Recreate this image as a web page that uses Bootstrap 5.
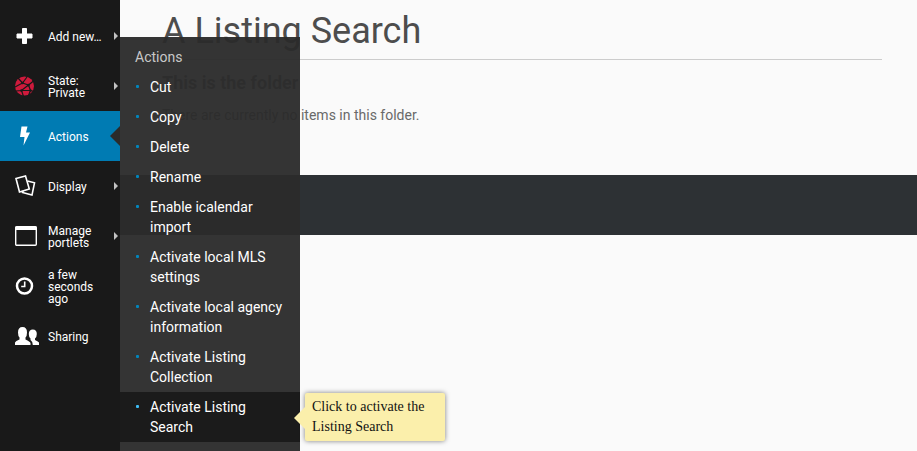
<!DOCTYPE html>
<html lang="en">
<head>
<meta charset="utf-8">
<title>A Listing Search</title>
<link href="https://cdn.jsdelivr.net/npm/bootstrap@5.3.0/dist/css/bootstrap.min.css" rel="stylesheet">
<style>
body{font-family:Roboto,sans-serif;background:#fafafa;color:#696969;height:451px;overflow:hidden}
.toolbar{width:120px;height:451px;background:#191919;padding-top:11px;z-index:5}
.tool{height:50px;padding-left:11px;color:#fff;text-decoration:none;font-size:12px;line-height:12px;position:relative;padding-top:2px}
.tool svg{width:28px;height:28px;flex:none;margin-right:9px;margin-top:-2px}
.tool.current{background:#007bb3}
.more::after{content:"";position:absolute;right:2px;top:21px;border:4px solid transparent;border-left-color:#c2c2c2;border-right:0}
.current::after{content:"";position:absolute;right:0;top:15px;border:10px solid transparent;border-right-color:#2b2b2b;border-left:0}
.submenu{position:absolute;left:120px;top:37px;width:180px;height:414px;background:rgba(43,43,43,.957);overflow:hidden;padding-top:10px;font-size:14px;line-height:20px;z-index:4}
.submenu h2{font-size:14px;line-height:20px;color:#c8c8c8;margin:0 0 5px 15px;font-weight:400}
.submenu a{display:block;color:#fff;text-decoration:none;padding:5px 10px 5px 30px;position:relative}
.submenu a::before{content:"";position:absolute;left:16px;top:13px;width:3px;height:3px;border-radius:1px;background:#0086bd}
.submenu a.chosen{background:#1b1b1b}
.submenu a.chosen::before{background:#3dbcf5}
.content-area{height:175px;padding:7px 35px 0 42px}
.content-area h1{font-size:36px;line-height:48px;font-weight:400;color:#4d4d4d;margin:0;border-bottom:1px solid #ccc;height:53px}
.content-area h3{font-size:18px;line-height:24px;font-weight:700;color:#696969;margin:11px 0 0}
.content-area p{font-size:14px;line-height:20px;margin:10px 0 0}
.footer-band{height:60px;background:#2d3134}
.hint{position:absolute;left:305px;top:393px;width:140px;height:48px;background:#fbefab;border-radius:2px;color:#111;font:14px/20px "Liberation Serif",serif;padding:4px 7px;box-shadow:0 0 5px rgba(0,0,0,.5);z-index:6}
.hint::before{content:"";position:absolute;left:-11px;top:14px;border:11px solid transparent;border-left:0;border-right-color:#fbefab}
</style>
<script src="https://cdn.jsdelivr.net/npm/bootstrap@5.3.0/dist/js/bootstrap.bundle.min.js"></script>
</head>
<body>
<div class="d-flex">
<nav class="toolbar flex-shrink-0 d-flex flex-column">
<a class="tool more d-flex align-items-center" href="#"><svg viewBox="0 0 28 28"><path d="M11.500 6.500h4v5.500H21v4h-5.500v5.500h-4V16H6v-4h5.500z" fill="#fff" stroke="#fff" stroke-linejoin="round"/></svg><span>Add new…</span></a>
<a class="tool more d-flex align-items-center" href="#"><svg viewBox="0 0 28 28"><circle cx="13.500" cy="14" r="9.500" fill="#cf1a3c"/><g fill="none" stroke="#191919" stroke-width="1.200"><path d="M7 6l4.500 5 4.500-6M11.500 11L4 15M11.500 11l6 2 5-4M17.500 13l-7 5.500L5 19M17.500 13l2 5.500 4 1M10.500 18.500l2 6M10.500 18.500l9 0-2 5"/></g><g fill="#191919"><circle cx="11.500" cy="11" r="1.300"/><circle cx="17.500" cy="13" r="1.300"/><circle cx="10.500" cy="18.500" r="1.300"/><circle cx="19.500" cy="18.500" r="1.200"/></g></svg><span>State:<br>Private</span></a>
<a class="tool current d-flex align-items-center" href="#"><svg viewBox="0 0 28 28"><path d="M10.500 4.500h6L15 10.500h4L12.500 23.500l1-8.500H9z" fill="#fff"/></svg><span>Actions</span></a>
<a class="tool more d-flex align-items-center" href="#"><svg viewBox="0 0 28 28" fill="none" stroke="#fff" stroke-width="1.600"><path d="M5 6.500L14.500 4l3.800 13L8.500 20z"/><path d="M16.500 9l7 1.800L21 23l-9.500-2.500.6-1.500"/></svg><span>Display</span></a>
<a class="tool more d-flex align-items-center" href="#"><svg viewBox="0 0 28 28"><rect x="4.700" y="4.700" width="20.600" height="18.600" rx="1" fill="none" stroke="#fff" stroke-width="1.400"/><path d="M4.500 4.500h21v3.500h-21z" fill="#fff"/></svg><span>Manage<br>portlets</span></a>
<a class="tool d-flex align-items-center" href="#"><svg viewBox="0 0 28 28" fill="none" stroke="#fff"><circle cx="13.500" cy="14" r="7.500" stroke-width="2.500"/><path d="M13.700 9.500v5h-3.500" stroke-width="1.600"/></svg><span>a few<br>seconds<br>ago</span></a>
<a class="tool d-flex align-items-center" href="#"><svg viewBox="0 0 28 28" fill="#fff"><path d="M4 23v-2.500q.5-1.300 4.500-3v-2q-1.500-1.500-1.500-5 0-5.500 4.500-5.500T16 10.500q0 3.500-1.500 5v2q4.500 2 5 3.500v2z"/><path d="M20.800 23h7.200v-2.500q-.5-1-4-2.500v-1.500q1.800-1.500 1.800-4.500 0-4.500-4-4.500t-4 4.500q0 3 1.700 4.500v1.500q2.300 1.500 2.300 5z"/></svg><span>Sharing</span></a>
</nav>
<main class="flex-grow-1">
<div class="content-area"><h1>A Listing Search</h1><h3>This is the folder</h3><p>There are currently no items in this folder.</p></div>
<footer class="footer-band"></footer>
</main>
</div>
<div class="submenu">
<h2>Actions</h2>
<a href="#">Cut</a><a href="#">Copy</a><a href="#">Delete</a><a href="#">Rename</a>
<a href="#">Enable icalendar<br>import</a><a href="#">Activate local MLS<br>settings</a><a href="#">Activate local agency<br>information</a><a href="#">Activate Listing<br>Collection</a><a class="chosen" href="#">Activate Listing<br>Search</a>
</div>
<div class="hint">Click to activate the<br>Listing Search</div>
</body>
</html>
